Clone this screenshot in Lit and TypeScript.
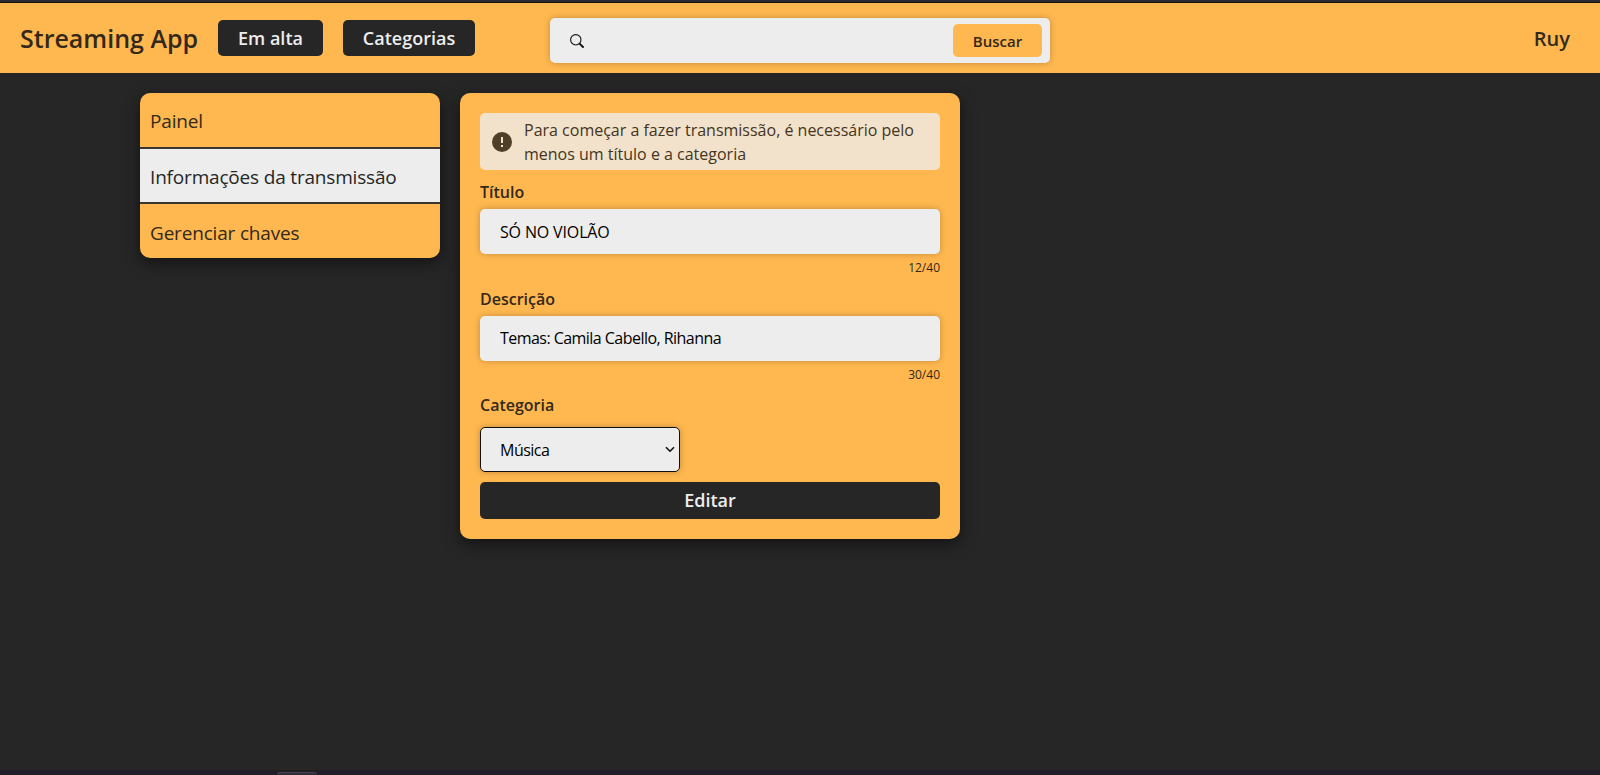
import { LitElement, html, css } from "lit";
import { customElement, property } from "lit/decorators.js";
import { classMap } from "lit/directives/class-map.js";

@customElement("form-field")
class FormField extends LitElement {
  @property() label = "";
  @property() value = "";
  @property({ type: Number }) max = 40;

  static styles = css`
    :host { display: block; height: 107px; }
    .label { display: block; height: 29px; line-height: 24px; font-size: 16px; font-weight: 600; color: #33281a; padding-top: 10px; box-sizing: content-box; }
    .input { display: block; box-sizing: border-box; width: 100%; height: 45px; border: 0; outline: 0; border-radius: 5px; padding: 0 20px 2px; margin: 0; background: #ededed; color: #000; font: 16px "Open Sans", sans-serif; letter-spacing: -0.54px; box-shadow: 0 0 6px rgba(0, 0, 0, 0.25); }
    .input.caps { letter-spacing: -0.15px; padding-bottom: 0; }
    .count { text-align: right; font-size: 12px; line-height: 16px; padding-top: 6px; color: #33281a; }
  `;

  render() {
    const caps = this.value === this.value.toUpperCase();
    return html`
      <label class="label">${this.label}</label>
      <input class=${classMap({ input: true, caps })} .value=${this.value} />
      <div class="count">${[...this.value].length}/${this.max}</div>
    `;
  }
}

@customElement("app-root")
class AppRoot extends LitElement {
  static styles = css`
    :host { display: flex; flex-direction: column; height: 775px; overflow: hidden; background: #262626; color: #33281a; font-family: "Open Sans", sans-serif; }
    .topline { flex: none; height: 2px; background: #2b2a33; border-bottom: 1px solid #150f14; }
    .header { flex: none; height: 70px; display: grid; grid-template-columns: 550px 500px 1fr; background: #ffb84f; box-sizing: border-box; }
    .left { display: flex; align-items: flex-start; padding: 17px 0 0 20px; }
    .brand { width: 198px; font-size: 25px; font-weight: 600; line-height: 37px; white-space: nowrap; }
    .nav { height: 36px; border: 0; border-radius: 5px; padding: 0; background: #262626; color: #ededed; font: 600 18px/36px "Open Sans", sans-serif; text-align: center; }
    .nav.hot { width: 105px; margin-right: 20px; }
    .nav.cats { width: 132px; }
    .search { height: 45px; margin-top: 15px; box-sizing: border-box; display: flex; align-items: center; justify-content: space-between; padding: 0 8px 0 20px; border-radius: 5px; background: #ededed; box-shadow: 0 0 6px rgba(0, 0, 0, 0.25); }
    .glass { width: 14px; height: 14px; display: block; }
    .go { width: 89px; height: 33px; border: 0; padding: 0; border-radius: 5px; background: #ffb84f; color: #33281a; font: 600 15px/34px "Open Sans", sans-serif; }
    .user { text-align: right; padding: 20px 30px 0 0; font-size: 20px; line-height: 31px; font-weight: 600; }
    .main { flex: 1; display: flex; align-items: flex-start; gap: 20px; padding: 20px 0 0 140px; }
    .side { width: 300px; border-radius: 10px; overflow: hidden; background: #ffb84f; box-shadow: 0 5px 15px rgba(0, 0, 0, 0.5); }
    .item { height: 54px; line-height: 56px; padding-left: 10px; font-size: 19px; letter-spacing: -0.18px; white-space: nowrap; }
    .item.active { height: 53px; background: #ededed; color: #262626; border: solid #3a3730; border-width: 2px 0; }
    .item.active + .item { line-height: 58px; }
    .card { width: 500px; height: 446px; box-sizing: border-box; padding: 20px; border-radius: 10px; background: #ffb84f; box-shadow: 0 5px 15px rgba(0, 0, 0, 0.5); }
    .alert { height: 57px; display: flex; align-items: center; gap: 12px; padding-left: 12px; border-radius: 5px; background: #f2e2cb; color: #443521; font-size: 16px; line-height: 24px; white-space: nowrap; }
    .warn { flex: none; width: 20px; height: 20px; }
    .label { display: block; font-size: 16px; font-weight: 600; line-height: 24px; padding-top: 9px; height: 34px; }
    .select { box-sizing: border-box; width: 200px; height: 45px; display: flex; align-items: center; justify-content: space-between; padding: 0 4px 0 19px; border: 1px solid #101010; border-radius: 5px; background: #ededed; color: #000; font-size: 16px; letter-spacing: -0.5px; box-shadow: 0 0 6px rgba(0, 0, 0, 0.25); }
    .chev { width: 10px; height: 7px; }
    .edit { display: block; width: 100%; height: 37px; margin-top: 10px; padding: 0; border: 0; border-radius: 5px; background: #262626; color: #ededed; font: 600 18px/37px "Open Sans", sans-serif; }
    .bottom { flex: none; height: 5px; padding-left: 277px; background: #211e27; }
    .tab { width: 40px; height: 3px; margin-top: 2px; border-top: 1px solid #45424b; border-radius: 3px 3px 0 0; background: #302d38; box-sizing: border-box; }
  `;

  render() {
    return html`
      <div class="topline"></div>
      <header class="header">
        <div class="left">
          <div class="brand">Streaming App</div>
          <button class="nav hot">Em alta</button>
          <button class="nav cats">Categorias</button>
        </div>
        <div class="search">
          <svg class="glass" viewBox="0 0 14 14" fill="none" stroke="#111">
            <circle cx="5.8" cy="5.8" r="5.2" stroke-width="1.1"></circle>
            <path d="M9.8 9.8 13 13" stroke-width="1.9" stroke-linecap="round"></path>
          </svg>
          <button class="go">Buscar</button>
        </div>
        <div class="user">Ruy</div>
      </header>
      <main class="main">
        <nav class="side">
          <div class="item">Painel</div>
          <div class="item active">Informações da transmissão</div>
          <div class="item">Gerenciar chaves</div>
        </nav>
        <section class="card">
          <div class="alert">
            <svg class="warn" viewBox="0 0 20 20">
              <circle cx="10" cy="10" r="10" fill="#4f3f29"></circle>
              <path d="M9 5h2v6H9zM9 13h2v2H9z" fill="#f2e2cb"></path>
            </svg>
            <div>Para começar a fazer transmissão, é necessário pelo<br />menos um título e a categoria</div>
          </div>
          <form-field label="Título" value="SÓ NO VIOLÃO"></form-field>
          <form-field label="Descrição" value="Temas: Camila Cabello, Rihanna"></form-field>
          <label class="label">Categoria</label>
          <div class="select">
            <span>Música</span>
            <svg class="chev" viewBox="0 0 10 7" fill="none" stroke="#111" stroke-width="1.6"><path d="M1 1.2 5 5.2 9 1.2"></path></svg>
          </div>
          <button class="edit">Editar</button>
        </section>
      </main>
      <footer class="bottom"><div class="tab"></div></footer>
    `;
  }
}
